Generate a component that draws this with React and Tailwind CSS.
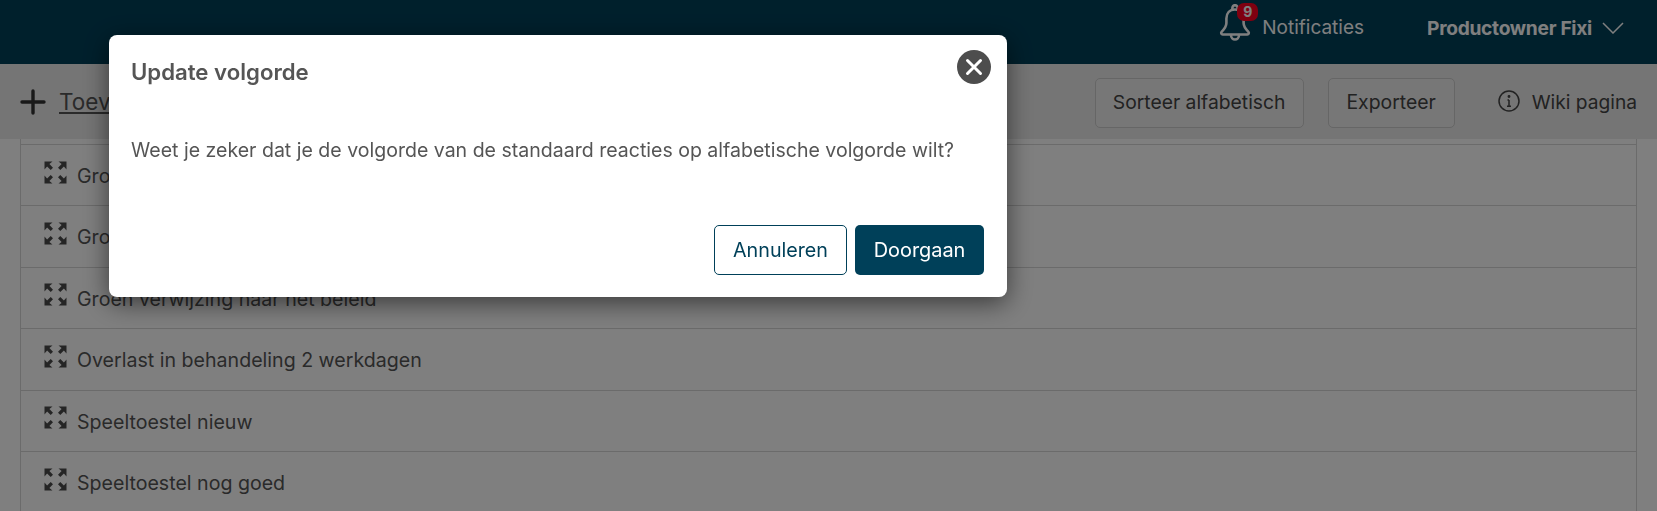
import React from 'react';

const rows = [
  'Groen afgehandeld',
  'Groen in behandeling',
  'Groen verwijzing naar het beleid',
  'Overlast in behandeling 2 werkdagen',
  'Speeltoestel nieuw',
  'Speeltoestel nog goed',
];

const ExpandIcon = () => (
  <svg width="23" height="23" viewBox="0 0 23 23" className="shrink-0 text-[#4a4a4a]" fill="currentColor">
    <path d="M.5 .5H8.500L5.400 3.100L9 6.700L6.700 9L3.100 5.400L.5 8.500Z" />
    <path d="M22.500 .5H14.500L17.600 3.100L14 6.700L16.300 9L19.900 5.400L22.500 8.500Z" />
    <path d="M.5 22.500H8.500L5.400 19.900L9 16.300L6.700 14L3.100 17.600L.5 14.500Z" />
    <path d="M22.500 22.500H14.500L17.600 19.900L14 16.300L16.300 14L19.900 17.600L22.500 14.500Z" />
  </svg>
);

const Header = () => (
  <div className="flex h-16 items-center justify-end bg-[#004059] text-white">
    <div className="relative mb-[18px] mr-[11px] h-[38px] w-[32px]">
      <svg width="32" height="38" viewBox="0 0 32 38" fill="none" stroke="currentColor" strokeWidth="2.6" strokeLinejoin="round" strokeLinecap="round">
        <path d="M16 5.500c-5.500 0-8.600 4-8.600 9v4.500c0 4-2 6-4.800 8.800-.9 1-.3 2.700 1.100 2.700h24.600c1.400 0 2-1.700 1.100-2.700-2.800-2.800-4.800-4.800-4.800-8.800v-4.500c0-5-3.100-9-8.600-9z" />
        <path d="M13.500 5.500c-.6-3 1-4.300 2.500-4.300s3.100 1.300 2.500 4.300" />
        <path d="M12 31c0 6 8 6 8 0" />
      </svg>
      <span className="absolute left-[18px] top-[-1px] flex h-[18px] w-[21px] items-center justify-center rounded-[7px] bg-[#ff0020] text-[14px] font-bold leading-none text-white">9</span>
    </div>
    <span className="mb-[7px] mr-[63px] text-[19px]">Notificaties</span>
    <span className="mb-[8px] mr-[10px] text-[19.200px] font-bold tracking-[-0.3px]">Productowner Fixi</span>
    <svg width="22" height="12" viewBox="0 0 22 12" fill="none" stroke="currentColor" strokeWidth="1.5" className="mb-[8px] mr-[33px]">
      <path d="M1 1l10 10L21 1" />
    </svg>
  </div>
);

const Toolbar = () => (
  <div className="flex h-[75px] items-center bg-[#ebebeb] pl-5 text-[#555555]">
    <svg width="26" height="26" viewBox="0 0 26 26" fill="none" stroke="#333333" strokeWidth="3.4" strokeLinecap="round" className="shrink-0">
      <path d="M13 2v22M2 13h22" />
    </svg>
    <a className="ml-[13px] text-[22.500px] underline">Toevoegen</a>
    <div className="ml-auto flex items-center pt-[2px]">
      <button className="h-[50px] w-[209px] rounded-[5px] border border-[#cccccc] bg-[#eeeeee] text-[19.300px] text-[#444444]">Sorteer alfabetisch</button>
      <button className="ml-[24px] h-[50px] w-[127px] rounded-[5px] border border-[#cccccc] bg-[#eeeeee] text-[19.400px] text-[#444444]">Exporteer</button>
      <svg width="22" height="22" viewBox="0 0 22 22" fill="none" stroke="#444444" strokeWidth="1.5" className="ml-[43px] mt-[-4px]">
        <circle cx="11" cy="11" r="10" />
        <path d="M11 10v6M9 16.200h4M9.500 10H11" />
        <circle cx="11" cy="6.500" r="0.700" fill="#444444" />
      </svg>
      <span className="ml-[12px] mr-5 text-[19.200px] text-[#444444]">Wiki pagina</span>
    </div>
  </div>
);

const Modal = () => (
  <div className="fixed inset-0 bg-black/50 pl-[109px] pt-[35px]">
    <div className="relative flex h-[262px] w-[898px] flex-col rounded-lg bg-white text-[#555555] shadow-[0_6px_26px_rgba(0,0,0,0.55)]">
      <h2 className="pl-[22px] pt-[23px] text-[22.200px] font-semibold leading-[28px]">Update volgorde</h2>
      <button className="absolute right-4 top-[15px] flex h-[34px] w-[34px] items-center justify-center rounded-full bg-[#4d4d4d]">
        <svg width="18" height="18" viewBox="0 0 18 18" fill="none" stroke="white" strokeWidth="3" strokeLinecap="round">
          <path d="M2.500 2.500l13 13M15.500 2.500l-13 13" />
        </svg>
      </button>
      <p className="pl-[22px] pt-[51px] text-[19.550px] leading-[26px]">Weet je zeker dat je de volgorde van de standaard reacties op alfabetische volgorde wilt?</p>
      <div className="mt-auto flex justify-end gap-2 pb-[22px] pr-[23px]">
        <button className="h-[50px] w-[133px] rounded-[5px] border border-[#004059] bg-white pt-[2px] text-[19.700px] text-[#004059]">Annuleren</button>
        <button className="h-[50px] w-[129px] rounded-[5px] bg-[#004059] pt-[2px] text-[19.900px] text-white">Doorgaan</button>
      </div>
    </div>
  </div>
);

export default function App() {
  return (
    <div className="h-[511px] overflow-hidden bg-white font-['Inter',sans-serif]">
      <Header />
      <Toolbar />
      <div className="mx-5 border-x border-[#d6d6d6] pt-[5px]">
        {rows.map((row) => (
          <div key={row} className="flex h-[61.4px] items-center border-t border-[#d6d6d6] pl-[23px] text-[19.600px] text-[#555555]">
            <span className="mt-[-6px]"><ExpandIcon /></span>
            <span className="ml-[10px] mt-[3px]">{row}</span>
          </div>
        ))}
      </div>
      <Modal />
    </div>
  );
}
